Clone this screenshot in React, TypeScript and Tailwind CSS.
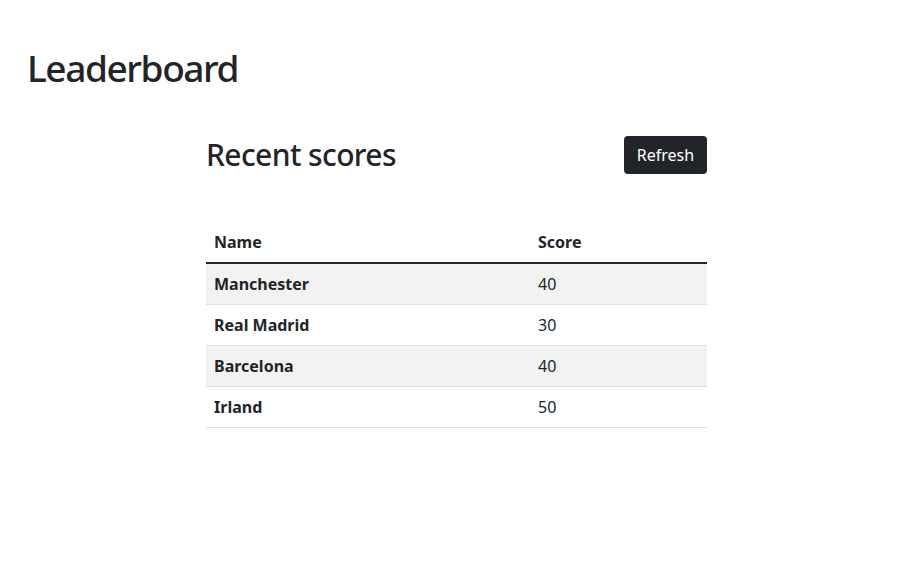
import React from "react";

const rows = [
  { name: "Manchester", score: 40 },
  { name: "Real Madrid", score: 30 },
  { name: "Barcelona", score: 40 },
  { name: "Irland", score: 50 },
];

export default function App() {
  return (
    <div className="min-h-[583px] bg-white font-['Noto_Sans',sans-serif] text-[#212529]">
      <div className="pl-[27px] pt-[44px]">
        <h1 className="text-[37px] font-medium leading-[48px] tracking-[-1.4px]">Leaderboard</h1>
      </div>
      <div className="ml-[206px] mt-[44px] w-[501px]">
        <div className="flex items-center justify-between">
          <h2 className="text-[30px] font-medium leading-[38px] tracking-[-0.6px]">Recent scores</h2>
          <button className="h-[38px] w-[83px] rounded-[4px] bg-[#212529] text-[16px] text-white">
            Refresh
          </button>
        </div>
        <table className="mt-[48px] w-full border-collapse text-[16px]">
          <thead>
            <tr className="border-b-2 border-[#212529]">
              <th className="w-[324px] px-2 py-2 text-left font-bold leading-6">Name</th>
              <th className="px-2 py-2 text-left font-bold leading-6">Score</th>
            </tr>
          </thead>
          <tbody>
            {rows.map((r, i) => (
              <tr
                key={r.name}
                className={`border-b border-[#dee2e6] ${i % 2 === 0 ? "bg-[#f2f2f2]" : "bg-white"}`}
              >
                <td className="px-2 py-2 font-bold leading-6">{r.name}</td>
                <td className="px-2 py-2 leading-6">{r.score}</td>
              </tr>
            ))}
          </tbody>
        </table>
      </div>
    </div>
  );
}
